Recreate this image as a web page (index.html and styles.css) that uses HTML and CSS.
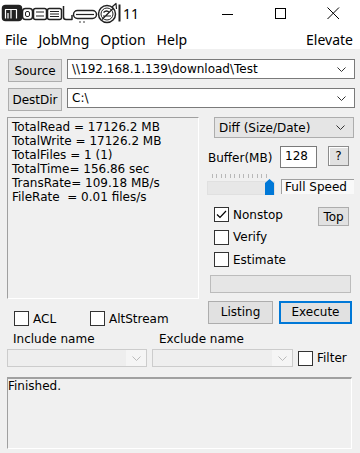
FILE: index.html
```html
<!doctype html>
<html lang="en">
<head>
<meta charset="UTF-8">
<meta name="viewport" content="width=device-width, initial-scale=1.0">
<title>FastCopy</title>
<link rel="stylesheet" href="styles.css">
</head>
<body>
<div class="titlebar">
	<svg class="logo" width="122" height="27" viewBox="0 0 122 27">
		<g fill="none" stroke="#222" stroke-width="1.5" stroke-linejoin="round">
			<rect x="2.5" y="5.5" width="19" height="15" rx="3" fill="#222"/>
			<path d="M5.5 18.5 V9.5 H11 V18.5 M11 9.5 H16.5 V18.5 M8 18.5 V13" stroke="#fff" stroke-width="1.2"/>
			<rect x="22.5" y="8.5" width="10" height="11" rx="3"/>
			<rect x="25.5" y="11.5" width="4" height="5" rx="1.5" stroke-width="1"/>
			<rect x="33.5" y="8.5" width="13" height="11" rx="2"/>
			<path d="M36 12 H44 M36 16 H44" stroke-width="1.2"/>
			<rect x="47.5" y="8.5" width="14" height="11" rx="2"/>
			<path d="M50 11.5 H59 M50 14 H59 M50 16.5 H59" stroke-width="1"/>
			<path d="M63.5 6 V17 a2.5 2.5 0 0 0 2.5 2.5 H72 V15"/>
			<rect x="73.5" y="10.5" width="23" height="8" rx="4"/>
			<path d="M76 14.5 H94" stroke-width="1.2"/>
			<circle cx="80" cy="22" r="0.8" fill="#222" stroke="none"/>
			<circle cx="84" cy="22" r="0.8" fill="#222" stroke="none"/>
			<circle cx="107" cy="14" r="8.5"/>
			<circle cx="107" cy="14" r="6" stroke-width="1"/>
			<path d="M103.5 12.5 q3 -3 6 0 M103 16 h8 M102 19.5 L113 8.5" stroke-width="1.2"/>
			<path d="M112 7 L116 3.5 L116.5 9" stroke-width="1.2"/>
			<path d="M119.5 4.5 V21.5" stroke-width="2"/>
		</g>
	</svg>
	<span class="title">11</span>
	<div class="controls">
		<span class="ctl"><svg width="12" height="12" viewBox="0 0 12 12"><path d="M0 6.5 H11" stroke="#000" stroke-width="1"/></svg></span>
		<span class="ctl"><svg width="12" height="12" viewBox="0 0 12 12"><rect x="0.5" y="0.5" width="10" height="10" fill="none" stroke="#000" stroke-width="1"/></svg></span>
		<span class="ctl"><svg width="13" height="13" viewBox="0 0 13 13"><path d="M0.5 0.5 L12 12 M12 0.5 L0.5 12" stroke="#000" stroke-width="1"/></svg></span>
	</div>
</div>

<div class="menubar">
	<span>File</span>
	<span>JobMng</span>
	<span>Option</span>
	<span>Help</span>
	<span class="elevate">Elevate</span>
</div>

<div class="paths">
	<div class="path-row">
		<button class="btn path-btn">Source</button>
		<div class="combo">
			<span>\\192.168.1.139\download\Test</span>
			<svg class="chev" width="9" height="5" viewBox="0 0 9 5"><path d="M0.5 0.5 L4.5 4.5 L8.5 0.5" fill="none" stroke="#333"/></svg>
		</div>
	</div>
	<div class="path-row">
		<button class="btn path-btn">DestDir</button>
		<div class="combo">
			<span>C:\</span>
			<svg class="chev" width="9" height="5" viewBox="0 0 9 5"><path d="M0.5 0.5 L4.5 4.5 L8.5 0.5" fill="none" stroke="#333"/></svg>
		</div>
	</div>
</div>

<div class="main">
	<div class="left">
		<div class="stats">
			<div>TotalRead = 17126.2 MB</div>
			<div>TotalWrite = 17126.2 MB</div>
			<div>TotalFiles = 1 (1)</div>
			<div>TotalTime= 156.86 sec</div>
			<div>TransRate= 109.18 MB/s</div>
			<div>FileRate  = 0.01 files/s</div>
		</div>
		<div class="opts">
			<label class="check acl"><span class="box"></span>ACL</label>
			<label class="check"><span class="box"></span>AltStream</label>
		</div>
	</div>

	<div class="right">
		<div class="select">
			<span>Diff (Size/Date)</span>
			<svg class="chev" width="9" height="5" viewBox="0 0 9 5"><path d="M0.5 0.5 L4.5 4.5 L8.5 0.5" fill="none" stroke="#333"/></svg>
		</div>
		<div class="buffer">
			<span class="buf-label">Buffer(MB)</span>
			<span class="input">128</span>
			<button class="btn help">?</button>
		</div>
		<div class="speed">
			<div class="slider">
				<div class="ticks"></div>
				<div class="track"></div>
				<svg class="thumb" width="9" height="16" viewBox="0 0 9 16"><path d="M0 4 L4.5 0 L9 4 V16 H0 Z" fill="#0078d7"/></svg>
			</div>
			<div class="speed-label">Full Speed</div>
		</div>
		<div class="checks">
			<div class="check-row">
				<label class="check">
					<span class="box"><svg width="13" height="13" viewBox="0 0 13 13"><path d="M2 6.5 L5 9.5 L11 3" fill="none" stroke="#000" stroke-width="1.2"/></svg></span>Nonstop
				</label>
				<button class="btn top">Top</button>
			</div>
			<div class="check-row"><label class="check"><span class="box"></span>Verify</label></div>
			<div class="check-row"><label class="check"><span class="box"></span>Estimate</label></div>
		</div>
		<div class="progress"></div>
		<div class="actions">
			<button class="btn listing">Listing</button>
			<button class="btn execute">Execute</button>
		</div>
	</div>
</div>

<div class="filters">
	<div class="filter-labels">
		<span class="inc-label">Include name</span>
		<span>Exclude name</span>
	</div>
	<div class="filter-row">
		<div class="combo disabled inc">
			<span class="arrow"><svg width="9" height="5" viewBox="0 0 9 5"><path d="M0.5 0.5 L4.5 4.5 L8.5 0.5" fill="none" stroke="#bbb"/></svg></span>
		</div>
		<div class="combo disabled exc">
			<span class="arrow"><svg width="9" height="5" viewBox="0 0 9 5"><path d="M0.5 0.5 L4.5 4.5 L8.5 0.5" fill="none" stroke="#bbb"/></svg></span>
		</div>
		<label class="check"><span class="box"></span>Filter</label>
	</div>
</div>

<div class="status">Finished.</div>
</body>
</html>
```

FILE: styles.css
```css
body {
	margin: 0;
	width: 360px;
	height: 453px;
	overflow: hidden;
	background-color: #f0f0f0;
	font-family: "DejaVu Sans", sans-serif;
	font-size: 12px;
	color: #000;
}

.titlebar {
	display: flex;
	align-items: center;
	height: 27px;
	background-color: #fff;
}

.logo {
	display: block;
	flex: none;
}

.title {
	font-family: "Noto Sans", sans-serif;
	font-size: 14px;
	margin-left: 1px;
}

.controls {
	display: flex;
	margin-left: auto;
	height: 27px;
}

.ctl {
	width: 53px;
	display: flex;
	align-items: center;
	justify-content: center;
}

.menubar {
	display: flex;
	gap: 11px;
	height: 22px;
	padding-left: 5px;
	padding-right: 7px;
	background-color: #fff;
	font-family: "Noto Sans", sans-serif;
	font-size: 14px;
	line-height: 25px;
}

.elevate {
	margin-left: auto;
}

.btn {
	font-family: "DejaVu Sans", sans-serif;
	font-size: 12px;
	color: #000;
	background-color: #e1e1e1;
	border: 1px solid #adadad;
	padding: 0;
	box-sizing: border-box;
}

.paths {
	padding: 10px 5px 0 8px;
}

.path-row {
	display: flex;
	align-items: flex-start;
	gap: 5px;
	margin-bottom: 6px;
}

.path-btn {
	width: 54px;
	height: 23px;
}

.combo {
	flex: 1;
	display: flex;
	align-items: center;
	height: 20px;
	box-sizing: border-box;
	border: 1px solid #7a7a7a;
	background-color: #fff;
	padding-left: 4px;
	padding-right: 8px;
	white-space: nowrap;
}

.chev {
	display: block;
	margin-left: auto;
}

.main {
	display: grid;
	grid-template-columns: 192px 147px;
	column-gap: 8px;
	padding-left: 7px;
	margin-top: 2px;
}

.stats {
	height: 182px;
	box-sizing: border-box;
	border-top: 1px solid #a0a0a0;
	border-left: 1px solid #a0a0a0;
	border-right: 1px solid #fff;
	border-bottom: 1px solid #fff;
	padding: 2px 4px 0;
	line-height: 14px;
}

.stats div {
	white-space: pre;
}

.opts {
	display: flex;
	padding-left: 7px;
	margin-top: 12px;
}

.check {
	display: flex;
	align-items: center;
	gap: 4px;
}

.acl {
	width: 76px;
}

.box {
	width: 15px;
	height: 15px;
	box-sizing: border-box;
	border: 1px solid #333;
	background-color: #fff;
	display: flex;
	align-items: center;
	justify-content: center;
}

.right {
	display: flex;
	flex-direction: column;
}

.select {
	display: flex;
	align-items: center;
	height: 21px;
	margin-left: 7px;
	box-sizing: border-box;
	border: 1px solid #adadad;
	background-color: #e5e5e5;
	padding-left: 4px;
	padding-right: 8px;
}

.buffer {
	display: flex;
	align-items: flex-start;
	margin-top: 8px;
	height: 22px;
}

.buf-label {
	margin-left: 1px;
	width: 72px;
	line-height: 24px;
}

.input {
	width: 37px;
	height: 22px;
	box-sizing: border-box;
	border: 1px solid #7a7a7a;
	background-color: #fff;
	padding-left: 4px;
	line-height: 19px;
}

.help {
	width: 21px;
	height: 20px;
	margin-left: 11px;
	border-color: #8c8c8c;
	box-shadow: inset 1px 1px 0 #fff;
}

.speed {
	display: flex;
	margin-top: 6px;
	height: 21px;
}

.slider {
	position: relative;
	width: 68px;
	height: 21px;
}

.ticks {
	height: 4px;
	margin: 0 5px 0 5px;
	background-image: repeating-linear-gradient(to right, #b8b8b8 0, #b8b8b8 1px, transparent 1px, transparent 4.5px);
}

.track {
	margin-top: 3px;
	height: 14px;
	background-color: #e7e7e7;
	border: 1px solid #e0e0e0;
	box-sizing: border-box;
}

.thumb {
	position: absolute;
	left: 58px;
	top: 5px;
}

.speed-label {
	margin-left: 6px;
	margin-top: 5px;
	width: 73px;
	height: 15px;
	box-sizing: border-box;
	border-top: 1px solid #a0a0a0;
	border-left: 1px solid #a0a0a0;
	background-color: #f9f9f9;
	padding-left: 3px;
	line-height: 14px;
}

.checks {
	margin-top: 12px;
	padding-left: 7px;
}

.check-row {
	display: flex;
	align-items: flex-start;
	height: 22.5px;
}

.top {
	margin-left: auto;
	margin-right: 5px;
	width: 31px;
	height: 19px;
}

.progress {
	margin-left: 3px;
	width: 141px;
	height: 18px;
	box-sizing: border-box;
	border: 1px solid #bcbcbc;
	background-color: #e6e6e6;
}

.actions {
	display: flex;
	gap: 6px;
	margin-top: 8px;
	margin-left: 1px;
}

.listing {
	width: 65px;
	height: 23px;
}

.execute {
	width: 73px;
	height: 23px;
	border-color: #0078d7;
	box-shadow: inset 0 0 0 1px #0078d7;
}

.filters {
	margin-top: 6px;
	padding-left: 7px;
}

.filter-labels {
	display: flex;
	line-height: 14px;
	padding-left: 6px;
}

.inc-label {
	width: 146px;
}

.filter-row {
	display: flex;
	align-items: center;
	gap: 5px;
	margin-top: 3px;
}

.combo.disabled {
	flex: none;
	height: 18px;
	border-color: #cccccc;
	background-color: #eeeeee;
	padding: 0;
	justify-content: flex-end;
}

.combo.inc {
	width: 140px;
}

.combo.exc {
	width: 141px;
}

.arrow {
	width: 20px;
	height: 16px;
	display: flex;
	align-items: center;
	justify-content: center;
	background-color: #f5f5f5;
}

.status {
	margin: 10px 8px 0 7px;
	height: 72px;
	box-sizing: border-box;
	border-top: 2px solid #a0a0a0;
	border-left: 1px solid #a0a0a0;
	border-right: 1px solid #fff;
	border-bottom: 1px solid #fff;
	line-height: 14px;
}
```
